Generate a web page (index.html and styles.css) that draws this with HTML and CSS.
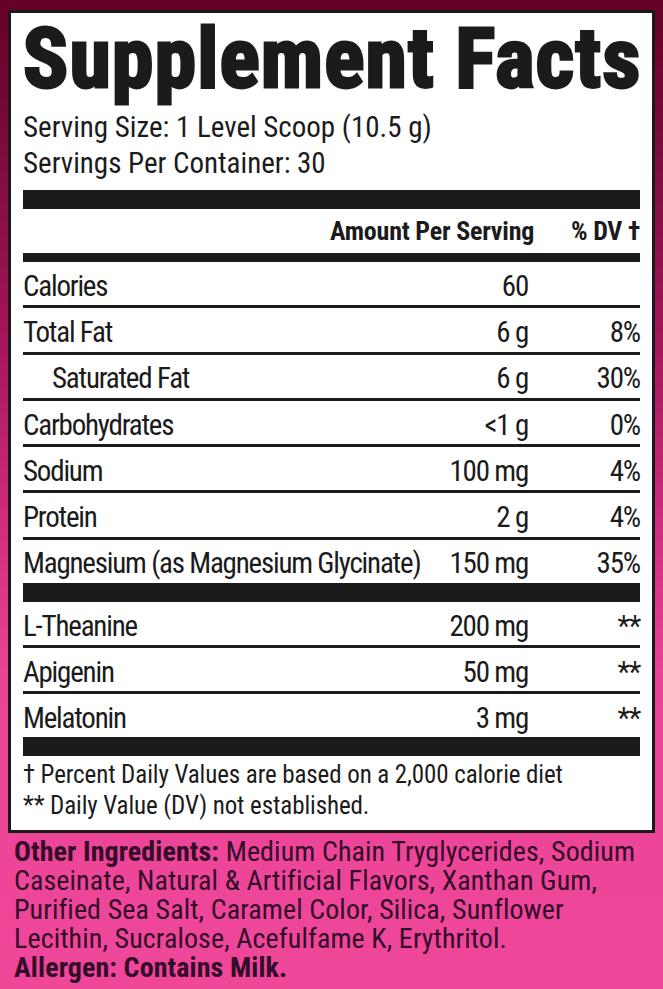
FILE: index.html
```html
<!DOCTYPE html>
<html lang="en">
<head>
<meta charset="utf-8">
<title>Supplement Facts</title>
<link rel="stylesheet" href="styles.css">
</head>
<body>
<main class="label">
  <section class="panel">
    <h1 class="title">Supplement Facts</h1>
    <p class="serving">Serving Size: 1 Level Scoop (10.5 g)</p>
    <p class="serving">Servings Per Container: 30</p>
    <div class="bar bar-thick"></div>
    <div class="row row-head">
      <span class="name"></span>
      <span class="amount">Amount Per Serving</span>
      <span class="dv">% DV †</span>
    </div>
    <div class="bar bar-mid"></div>
    <div class="group group-main">
      <div class="row"><span class="name">Calories</span><span class="amount">60</span><span class="dv"></span></div>
      <div class="row"><span class="name">Total Fat</span><span class="amount">6 g</span><span class="dv">8%</span></div>
      <div class="row"><span class="name indent">Saturated Fat</span><span class="amount">6 g</span><span class="dv">30%</span></div>
      <div class="row"><span class="name">Carbohydrates</span><span class="amount">&lt;1 g</span><span class="dv">0%</span></div>
      <div class="row"><span class="name">Sodium</span><span class="amount">100 mg</span><span class="dv">4%</span></div>
      <div class="row"><span class="name">Protein</span><span class="amount">2 g</span><span class="dv">4%</span></div>
      <div class="row"><span class="name">Magnesium (as Magnesium Glycinate)</span><span class="amount">150 mg</span><span class="dv">35%</span></div>
    </div>
    <div class="bar bar-thick"></div>
    <div class="group group-other">
      <div class="row"><span class="name">L-Theanine</span><span class="amount">200 mg</span><span class="dv">**</span></div>
      <div class="row"><span class="name">Apigenin</span><span class="amount">50 mg</span><span class="dv">**</span></div>
      <div class="row"><span class="name">Melatonin</span><span class="amount">3 mg</span><span class="dv">**</span></div>
    </div>
    <div class="bar bar-thick"></div>
    <p class="note">† Percent Daily Values are based on a 2,000 calorie diet</p>
    <p class="note">** Daily Value (DV) not established.</p>
  </section>
  <section class="ingredients">
    <p><strong>Other Ingredients:</strong> Medium Chain Tryglycerides, Sodium Caseinate, Natural &amp; Artificial Flavors, Xanthan Gum, Purified Sea Salt, Caramel Color, Silica, Sunflower Lecithin, Sucralose, Acefulfame K, Erythritol.</p>
    <p><strong>Allergen: Contains Milk.</strong></p>
  </section>
</main>
</body>
</html>
```

FILE: styles.css
```css
* { box-sizing: border-box; }

html, body {
  margin: 0;
  padding: 0;
}

body {
  width: 663px;
  height: 989px;
  overflow: hidden;
  font-family: "Roboto", "Liberation Sans", sans-serif;
  font-stretch: condensed;
  background: linear-gradient(180deg, #650027 0%, #7a0b3a 14%, #a4155a 34%, #d22e80 54%, #ea4396 68%, #ef479a 100%);
}

.label {
  display: flex;
  flex-direction: column;
  padding: 10px 8px 0;
}

.panel {
  height: 823px;
  background: #fff;
  border: 3px solid #1a1a1a;
  padding: 0 12px;
  color: #1b1b1b;
  display: flex;
  flex-direction: column;
}

.title {
  margin: 0;
  padding-top: 6px;
  font-size: 84px;
  line-height: 80px;
  font-weight: 700;
  letter-spacing: 1.1px;
  -webkit-text-stroke: 2.8px #1b1b1b;
  white-space: nowrap;
}

.serving {
  margin: 0;
  font-size: 29px;
  line-height: 36px;
  letter-spacing: 0;
}
.title + .serving { margin-top: 10px; }

.bar { background: #1b1b1b; flex: none; }
.bar-thick { height: 19px; }
.bar-mid { height: 9px; }
.serving + .bar { margin-top: 9px; }

.row {
  display: grid;
  grid-template-columns: minmax(0, 1fr) 200px 110px;
  align-items: center;
  height: 43.3px;
  padding-top: 4px;
  font-size: 29px;
  line-height: 34px;
  letter-spacing: -1.2px;
  white-space: nowrap;
}

.row + .row { border-top: 3px solid #1b1b1b; height: 46.3px; }

.group-other .row { height: 43px; }
.group-other .row + .row { height: 46px; }

.row-head {
  height: 44px;
  padding-top: 0;
  font-size: 26px;
  font-weight: 700;
  letter-spacing: -0.2px;
}

.amount, .dv { text-align: right; }
.amount { padding-right: 2px; }

.indent { padding-left: 29px; }

.note {
  margin: 0;
  font-size: 25px;
  line-height: 31px;
  letter-spacing: -0.1px;
  white-space: nowrap;
}
.bar + .note { margin-top: 3px; }

.ingredients {
  padding: 4px 8px 0 6px;
  color: #330c29;
  font-size: 28px;
  line-height: 29px;
  letter-spacing: 0.1px;
}

.ingredients p { margin: 0; }
.ingredients strong { font-weight: 700; }
```
